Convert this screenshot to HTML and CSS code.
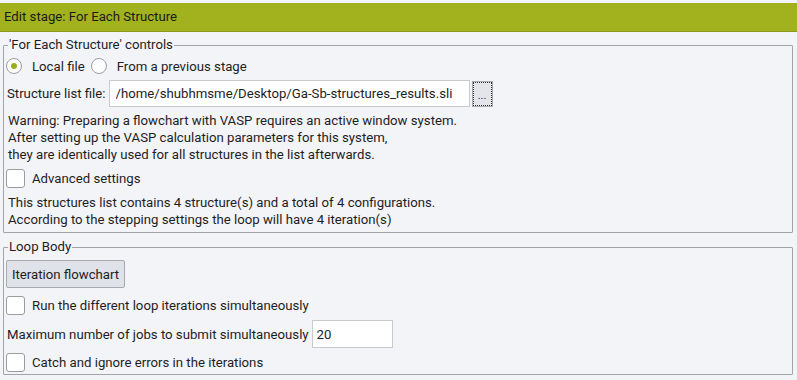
FILE: index.html
```html
<!DOCTYPE html>
<html lang="en">

<head>
  <meta charset="UTF-8">
  <meta name="viewport" content="width=device-width, initial-scale=1.0">
  <title>Edit stage</title>
  <link rel="stylesheet" href="styles.css">
</head>

<body>
  <div class="header">Edit stage: For Each Structure</div>

  <fieldset class="group controls">
    <legend>'For Each Structure' controls</legend>

    <div class="row radios">
      <label class="option"><span class="radio checked"></span>Local file</label>
      <label class="option"><span class="radio"></span>From a previous stage</label>
    </div>

    <div class="row file-row">
      <label for="structFile" class="field-label">Structure list file:</label>
      <input type="text" id="structFile" class="file-input" value="/home/shubhmsme/Desktop/Ga-Sb-structures_results.sli">
      <button type="button" class="browse">...</button>
    </div>

    <p class="note warning">
      Warning: Preparing a flowchart with VASP requires an active window system.<br>
      After setting up the VASP calculation parameters for this system,<br>
      they are identically used for all structures in the list afterwards.
    </p>

    <label class="row check-row advanced"><span class="box"></span>Advanced settings</label>

    <p class="note summary">
      This structures list contains 4 structure(s) and a total of 4 configurations.<br>
      According to the stepping settings the loop will have 4 iteration(s)
    </p>
  </fieldset>

  <fieldset class="group loop">
    <legend>Loop Body</legend>

    <button type="button" class="flow-btn">Iteration flowchart</button>

    <label class="row check-row run-row"><span class="box"></span>Run the different loop iterations simultaneously</label>

    <div class="row jobs-row">
      <label for="maxJobs" class="field-label">Maximum number of jobs to submit simultaneously</label>
      <input type="text" id="maxJobs" class="jobs-input" value="20">
    </div>

    <label class="row check-row catch-row"><span class="box"></span>Catch and ignore errors in the iterations</label>
  </fieldset>
</body>

</html>
```

FILE: styles.css
```css
body {
  margin: 0;
  padding-top: 3px;
  background-color: #f3f4f8;
  font-family: Roboto, "Noto Sans", sans-serif;
  font-size: 13.2px;
  color: #1e1e1e;
}

.header {
  height: 28px;
  line-height: 28px;
  padding-left: 4px;
  background-color: #a2b21f;
  border-bottom: 1px solid #8c9a1c;
  color: #1a1a1a;
}

.group {
  margin: 0 4px 0 3px;
  padding: 0 3px 0 2px;
  border: 1px solid #a3a4a8;
  border-radius: 1px;
}

.controls {
  margin-top: 5px;
  padding-bottom: 4px;
}

.loop {
  margin-top: 6px;
  padding-bottom: 2px;
}

legend {
  padding: 0 1px;
  margin-left: 2px;
  line-height: 16px;
}

.row {
  display: flex;
  align-items: center;
}

.radios {
  height: 22px;
  gap: 6px;
  margin-top: 2px;
}

.option {
  display: flex;
  align-items: center;
}

.radio {
  width: 14px;
  height: 14px;
  margin-right: 10px;
  border: 1px solid #9a9ca2;
  border-radius: 50%;
  background-color: #fff;
  display: flex;
  align-items: center;
  justify-content: center;
}

.radio.checked::after {
  content: "";
  width: 6px;
  height: 6px;
  border-radius: 50%;
  background-color: #9aac24;
}

.field-label {
  padding-left: 1px;
}

.file-row {
  margin-top: 3px;
  height: 27px;
}

.file-input {
  margin-left: 3px;
  width: 361px;
  height: 27px;
  box-sizing: border-box;
  padding: 0 6px;
  border: 1px solid #c9cacd;
  background-color: #fff;
  font-family: inherit;
  font-size: inherit;
  color: #1e1e1e;
}

.browse {
  margin-left: 2px;
  width: 21px;
  height: 26px;
  padding: 4px 0 0;
  border: 1px solid #a8a9ad;
  outline: 1px dotted #333;
  outline-offset: -2px;
  background-color: #e3e5ea;
  font-family: inherit;
  font-size: 11px;
  color: #333;
}

.note {
  margin: 0;
  padding-left: 2px;
  line-height: 17px;
}

.warning {
  margin-top: 5px;
}

.summary {
  margin-top: 6px;
}

.check-row {
  height: 20px;
}

.advanced {
  margin-top: 5px;
}

.run-row {
  margin-top: 7px;
}

.catch-row {
  margin-top: 4px;
}

.box {
  width: 19px;
  height: 19px;
  margin-right: 7px;
  border: 1px solid #9a9ca2;
  border-radius: 3px;
  background-color: #fff;
  box-sizing: border-box;
}

.flow-btn {
  display: block;
  margin-top: 5px;
  width: 119px;
  height: 28px;
  padding: 0;
  border: 1px solid #a8a9ad;
  border-radius: 2px;
  background-color: #dfe2e8;
  font-family: inherit;
  font-size: inherit;
  color: #1e1e1e;
}

.jobs-row {
  margin-top: 5px;
  height: 28px;
}

.jobs-input {
  margin-left: 3px;
  width: 81px;
  height: 28px;
  box-sizing: border-box;
  padding: 0 4px;
  border: 1px solid #c9cacd;
  background-color: #fff;
  font-family: inherit;
  font-size: inherit;
  color: #1e1e1e;
}
```
